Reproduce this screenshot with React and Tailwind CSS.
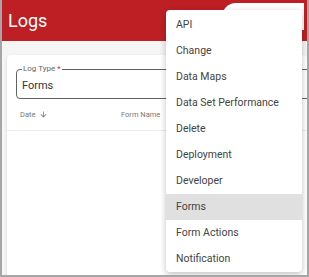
import React from "react";

const logTypes = [
    "API",
    "Change",
    "Data Maps",
    "Data Set Performance",
    "Delete",
    "Deployment",
    "Developer",
    "Forms",
    "Form Actions",
    "Notification",
];

function ArrowDown() {
    return (
        <svg width="9" height="9" viewBox="0 0 24 24" className="ml-[4px]">
            <path d="M20 12l-1.41-1.41L13 16.17V4h-2v12.17l-5.58-5.59L4 12l8 8 8-8z" fill="#777" />
        </svg>
    );
}

export default function App() {
    const selected = "Forms";

    return (
        <div className="relative w-[309px] h-[277px] overflow-hidden border-x-2 border-b-2 border-[#a6a6a6] bg-[#f5f5f5] font-['Roboto',sans-serif]">
            {/* header */}
            <div className="relative h-[41px] bg-[#bd1f25]">
                <div className="pl-[6px] pt-[10px] text-[18px] leading-[22px] text-white">Logs</div>
                <div className="absolute left-[220px] top-[3px] w-[82px] h-[27px] bg-white rounded-tl-[14px]"></div>
            </div>

            {/* content */}
            <div className="pl-[5px] pt-[14px]">
                <div className="bg-white rounded-[4px] shadow-[0_1px_3px_rgba(0,0,0,0.15)] h-[240px]">
                    <div className="px-[9px] pt-[10px]">
                        <fieldset className="h-[34px] w-[300px] border-[1.5px] border-[#5f6368] rounded-[4px] px-[5px]">
                            <legend className="px-[1px] text-[8px] leading-[8px] text-[#666]">
                                Log Type <span className="text-[#d32f2f]">*</span>
                            </legend>
                            <div className="text-[11px] leading-[14px] text-[#333] pt-[6px]">Forms</div>
                        </fieldset>
                    </div>
                    <div className="flex items-center h-[32px] px-[13px] border-b border-[#ececec] text-[7.5px] text-[#777]">
                        <div className="flex items-center w-[101px]">
                            Date
                            <ArrowDown />
                        </div>
                        <div>Form Name</div>
                    </div>
                </div>
            </div>

            {/* dropdown menu */}
            <div className="absolute left-[164px] top-[10px] w-[136px] h-[262px] pt-[2px] bg-white rounded-[4px] shadow-[0_2px_6px_rgba(0,0,0,0.25)]">
                {logTypes.map((t) => (
                    <div
                        key={t}
                        className={
                            "h-[26px] flex items-center pl-[10px] text-[10.5px] text-[#444] " +
                            (t === selected ? "bg-[#e0e0e0]" : "")
                        }
                    >
                        {t}
                    </div>
                ))}
            </div>
        </div>
    );
}
